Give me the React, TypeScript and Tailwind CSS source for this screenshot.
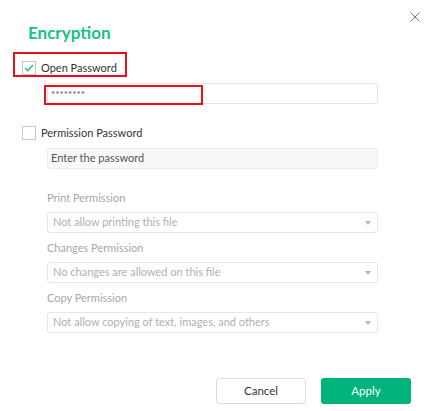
import React from "react";

function Select({ text }: { text: string }) {
  return (
    <div className="flex h-[21px] w-[331px] items-center justify-between rounded-[3px] border border-[#e6e6e6] bg-white pl-[5px] pr-[6px]">
      <span className="text-[11px] text-[#b0b0b0]">{text}</span>
      <svg width="6" height="4" viewBox="0 0 6 4"><path d="M0 0H6L3 4Z" fill="#b5b5b5" /></svg>
    </div>
  );
}

export default function App() {
  return (
    <div className="relative h-[411px] w-[428px] bg-white font-['Lato','Liberation_Sans',sans-serif] text-[#333]">
      <button className="absolute left-[410px] top-[12px] text-[#666]">
        <svg width="10" height="10" viewBox="0 0 10 10" className="block"><path d="M0.5 0.5L9.5 9.5M9.5 0.5L0.5 9.5" stroke="#777" strokeWidth="1" /></svg>
      </button>
      <div className="flex flex-col pl-[22px] pt-[22px]">
        <h1 className="ml-[6px] text-[17px] font-bold leading-[22px] text-[#17c186]">Encryption</h1>
        <div className="relative mt-[17px] flex h-[14px] items-center">
          <div className="absolute left-[-9px] top-[-9px] h-[25px] w-[114px] border-2 border-[#e8101a]" />
          <div className="flex h-[14px] w-[14px] items-center justify-center border border-[#c8c8c8] bg-white">
            <svg width="10" height="8" viewBox="0 0 10 8"><path d="M1 4L3.8 6.7L9 1" fill="none" stroke="#1dbf85" strokeWidth="1.5" /></svg>
          </div>
          <span className="ml-[5px] text-[11px] text-[#333]">Open Password</span>
        </div>
        <div className="relative ml-[25px] mt-[8px] flex h-[21px] w-[331px] items-center rounded-[3px] border border-[#e3e3e3] pl-[3px]">
          <div className="absolute left-[-4px] top-[1px] h-[20px] w-[159px] border-2 border-[#e8101a]" />
          <span className="text-[10px] leading-none text-[#555]">********</span>
        </div>
        <div className="mt-[22px] flex h-[14px] items-center">
          <div className="h-[14px] w-[14px] border border-[#c8c8c8] bg-white" />
          <span className="ml-[5px] text-[11px] text-[#333]">Permission Password</span>
        </div>
        <div className="ml-[25px] mt-[8px] flex h-[21px] w-[331px] items-center rounded-[3px] border border-[#ececec] bg-[#f8f8f8] pl-[3px]">
          <span className="text-[11px] text-[#555]">Enter the password</span>
        </div>
        <div className="ml-[25px] flex flex-col">
          <div className="mt-[22px] text-[11px] leading-[14px] text-[#a8a8a8]">Print Permission</div>
          <div className="mt-[7px]"><Select text="Not allow printing this file" /></div>
          <div className="mt-[8px] text-[11px] leading-[14px] text-[#a8a8a8]">Changes Permission</div>
          <div className="mt-[7px]"><Select text="No changes are allowed on this file" /></div>
          <div className="mt-[8px] text-[11px] leading-[14px] text-[#a8a8a8]">Copy Permission</div>
          <div className="mt-[7px]"><Select text="Not allow copying of text, images, and others" /></div>
        </div>
      </div>
      <div className="absolute bottom-[7px] right-[17px] flex gap-[15px]">
        <button className="h-[26px] w-[90px] rounded-[3px] border border-[#dcdcdc] bg-white text-[11.5px] text-[#333]">Cancel</button>
        <button className="h-[26px] w-[90px] rounded-[3px] bg-[#00b27c] text-[11.5px] text-white">Apply</button>
      </div>
    </div>
  );
}
